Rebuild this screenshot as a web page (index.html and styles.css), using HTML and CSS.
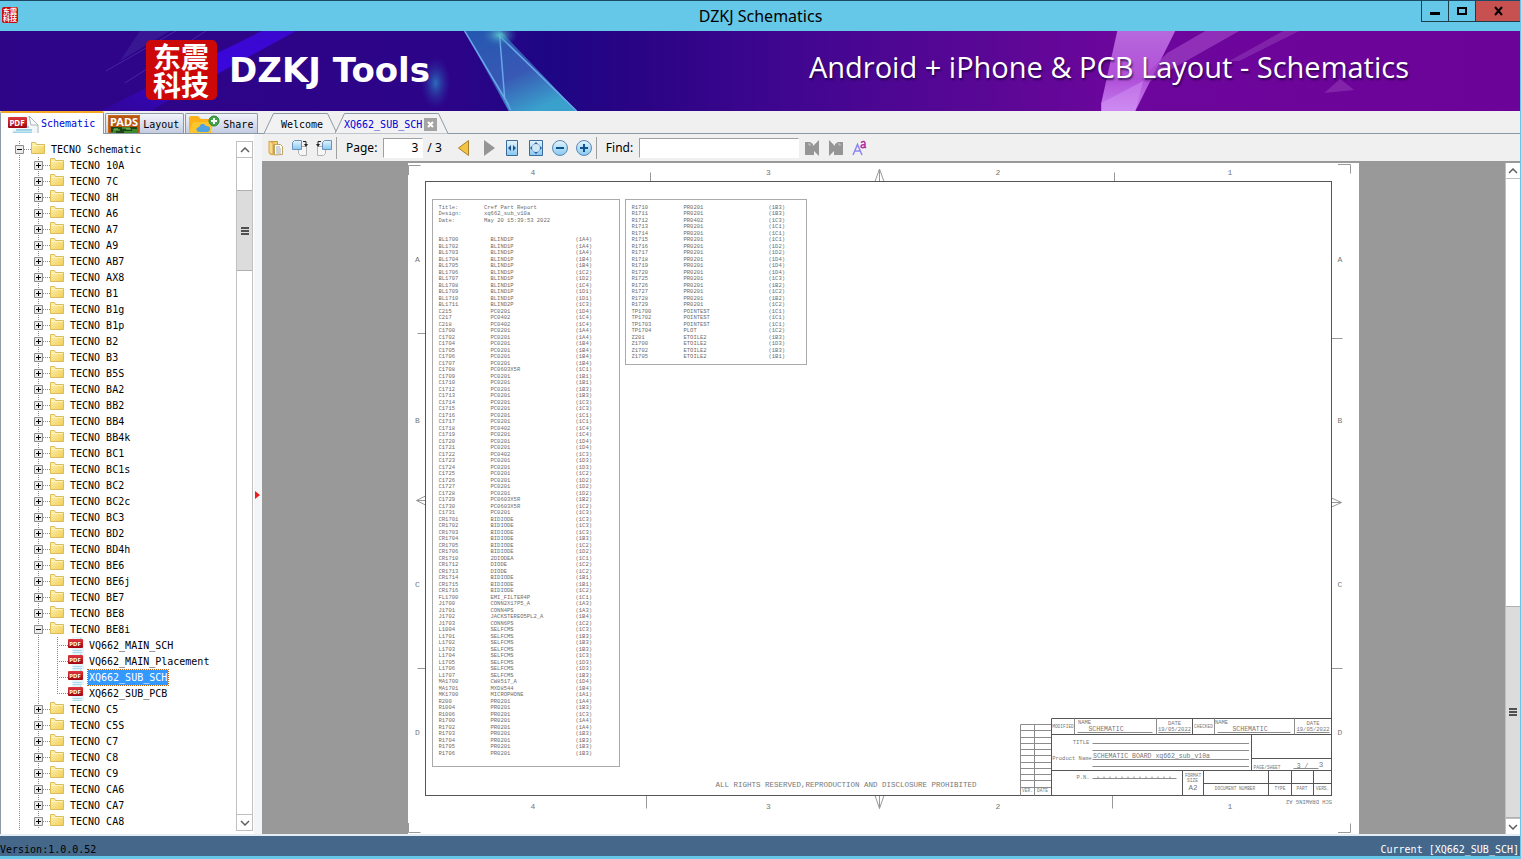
FILE: index.html
```html
<!DOCTYPE html>
<html lang="en">
  <head>
    <meta charset="UTF-8" />
    <meta name="viewport" content="width=device-width, initial-scale=1.0" />
    <title>DZKJ Schematics</title>
    <link rel="stylesheet" href="styles.css">
  </head>
  <body>
    <!-- shared icons -->
    <svg class="defs" width="0" height="0">
      <defs>
        <linearGradient id="gFolder" x1="0" y1="0" x2="1" y2="1">
          <stop offset="0" stop-color="#fff3b0" />
          <stop offset="1" stop-color="#f0cf58" />
        </linearGradient>
        <linearGradient id="gBlue" x1="0" y1="0" x2="0" y2="1">
          <stop offset="0" stop-color="#e4f4fd" />
          <stop offset="1" stop-color="#86c8f0" />
        </linearGradient>
        <linearGradient id="gRed" x1="0" y1="0" x2="0" y2="1">
          <stop offset="0" stop-color="#e0383c" />
          <stop offset="1" stop-color="#a00610" />
        </linearGradient>
      </defs>
      <symbol id="folder" viewBox="0 0 14 14">
        <path d="M.5 11.500V.5h4l1 2h8v9z" fill="url(#gFolder)" stroke="#dcbc58" />
        <path d="M1.500 3.500h11" fill="none" stroke="#fff6c4" />
      </symbol>
      <symbol id="pdf" viewBox="0 0 16 16">
        <path d="M4 0h8l4 4v12H4z" fill="#e6f5fb" />
        <path d="M12 0l4 4h-4zM5 13h9v1H5zM5 15h9v1H5z" fill="#a9dcec" />
        <rect x="0" y="2" width="15" height="9" rx="1" fill="url(#gRed)" />
        <text x="7" y="9" class="pdf-text">PDF</text>
      </symbol>
    </svg>

    <header class="titlebar">
      <span class="app-icon">东震科技</span>
      <h1>DZKJ Schematics</h1>
      <div class="win-buttons">
        <button class="win-min" aria-label="Minimize"><svg width="10" height="10"><rect y="6" width="10" height="3" /></svg></button>
        <button class="win-max" aria-label="Maximize"><svg width="10" height="10"><path d="M1 2h8v6H1z" fill="none" stroke="#000" stroke-width="2" /></svg></button>
        <button class="win-close" aria-label="Close"><svg width="10" height="10"><path d="M1 1l7 8M8 1L1 9" stroke="#000" stroke-width="2" /></svg></button>
      </div>
    </header>

    <div class="banner">
      <svg class="banner-art" viewBox="0 0 1521 80" preserveAspectRatio="none">
        <defs>
          <linearGradient id="bBase">
            <stop offset="0" stop-color="#2f0588" />
            <stop offset=".3" stop-color="#2c0488" />
            <stop offset=".36" stop-color="#1d0684" />
            <stop offset=".42" stop-color="#2a0484" />
            <stop offset=".52" stop-color="#400690" />
            <stop offset=".64" stop-color="#580795" />
            <stop offset=".74" stop-color="#6d069c" />
            <stop offset="1" stop-color="#6c0399" />
          </linearGradient>
          <linearGradient id="bShard" x1="0" y1="0" x2=".6" y2="1">
            <stop offset="0" stop-color="#2458b0" />
            <stop offset=".6" stop-color="#3858b4" />
            <stop offset="1" stop-color="#3aa0cc" />
          </linearGradient>
          <linearGradient id="bPink" x1="0" y1="0" x2="0" y2="1">
            <stop offset="0" stop-color="#b768dc" />
            <stop offset=".6" stop-color="#b04fd8" />
            <stop offset="1" stop-color="#c67ff0" />
          </linearGradient>
          <linearGradient id="bRay" x1="1" y1="0" x2="0" y2="1">
            <stop offset="0" stop-color="#3a08cc" />
            <stop offset=".5" stop-color="#3a06e0" />
            <stop offset="1" stop-color="#3407b0" stop-opacity=".4" />
          </linearGradient>
          <radialGradient id="bGlow">
            <stop offset="0" stop-color="#2a78c0" stop-opacity=".9" />
            <stop offset="1" stop-color="#2a30a0" stop-opacity="0" />
          </radialGradient>
          <radialGradient id="bTeal">
            <stop offset="0" stop-color="#5fd0d0" stop-opacity=".9" />
            <stop offset="1" stop-color="#2a60b0" stop-opacity="0" />
          </radialGradient>
        </defs>
        <rect width="1521" height="80" fill="url(#bBase)" />
        <path d="M262 0h34L150 80h-50z" fill="url(#bRay)" />
        <path d="M206 0L125 52M176 0l-70 40" stroke="#5a38b8" opacity=".6" />
        <path d="M140 0h30l-50 30z" fill="#4a3aa8" opacity=".35" />
        <ellipse cx="436" cy="52" rx="15" ry="26" fill="url(#bGlow)" />
        <path d="M465 0h36l76 80h-68z" fill="url(#bShard)" />
        <path d="M500 5l5 62 6 12M501 6l76 74M465 0l44 74" fill="none" stroke="#69a6ea" stroke-width="1.500" />
        <ellipse cx="500" cy="4" rx="18" ry="12" fill="url(#bTeal)" />
        <path d="M1118 0h58l-40 80h-34v-8z" fill="url(#bPink)" />
        <path d="M1102 72l42-22-8 30h-34z" fill="#d596f4" opacity=".45" />
        <path d="M1206 0h34l-92 52-6-4 26-26z" fill="#a347c8" opacity=".65" />
        <path d="M1284 0h16l-60 30h-10z" fill="#8f35b4" opacity=".6" />
        <path d="M1325 62l16-14 14 11z" fill="#8d30b0" opacity=".7" />
      </svg>
      <div class="brand">
        <span class="logo">东震科技</span>
        <span class="brand-name">DZKJ Tools</span>
      </div>
      <p class="slogan">Android + iPhone &amp; PCB Layout - Schematics</p>
    </div>

    <main>
      <aside class="sidebar">
        <div class="side-tabs">
          <button class="side-tab active">
            <svg width="32" height="18" viewBox="0 0 32 18">
              <path d="M5 1h17l9 9v8H5z" fill="#f4f7f9" />
              <path d="M22 1l9 9h-7z" fill="#fff" stroke="#a9b3bb" />
              <path d="M31 10v8" stroke="#a9b3bb" />
              <path d="M9 15h16M9 12h13M6 17.500h19" stroke="#9fd3e8" stroke-width="2" />
              <rect x="1" y="2" width="19" height="11" rx="1" fill="url(#gRed)" />
              <text x="10" y="11" class="pdf-big">PDF</text>
            </svg>
            Schematic
          </button>
          <button class="side-tab">
            <svg width="32" height="18" viewBox="0 0 32 18">
              <rect width="32" height="18" fill="#c86a1c" />
              <rect x="1" y="1" width="30" height="17" fill="#b9560f" />
              <path d="M3 12h27v6H3z" fill="#3f8a2c" />
              <path d="M4 17V13h9v2h10v-2h6M8 17h8" fill="none" stroke="#1c4416" stroke-width="2" />
              <path d="M6 14h4M18 14h5" stroke="#8fd070" />
              <text x="16" y="11" class="pads-text">PADS</text>
            </svg>
            Layout
          </button>
          <button class="side-tab">
            <svg width="32" height="18" viewBox="0 0 32 18">
              <path d="M1 18V3q0-2 2-2h7l3 3h7q3 0 3 3v11z" fill="#fbb117" />
              <path d="M1 18l4-11h21l-4 11z" fill="#fdc62d" />
              <path d="M9 16q-2-3 2-4 3-6 7-1 5 0 4 4-1 2-3 2h-7q-2 0-3-1z" fill="#4ea3e2" />
              <circle cx="26" cy="6" r="5" fill="#3fa648" stroke="#2b8436" />
              <path d="M26 3v6M23 6h6" stroke="#fff" stroke-width="2" />
            </svg>
            Share
          </button>
        </div>
        <div class="side-body">
          <ul class="tree" id="tree"></ul>
          <div class="scrollbar side-scroll">
            <button aria-label="Scroll up"><svg width="10" height="6"><path d="M1 5l4-4 4 4" /></svg></button>
            <div class="thumb"><i></i><i></i><i></i></div>
            <button aria-label="Scroll down"><svg width="10" height="6"><path d="M1 1l4 4 4-4" /></svg></button>
          </div>
        </div>
      </aside>
      <div class="splitter"><svg width="5" height="8"><path d="M0 0l5 4-5 4z" fill="#e8201c" /></svg></div>

      <section class="viewer">
        <nav class="doc-tabs">
          <button class="doc-tab welcome">
            <svg width="75" height="21" viewBox="0 0 75 21"><path d="M0 20.500h1L10.500.5h54l9.500 20" fill="#f2f2f3" stroke="#8b9aa5" /></svg>
            <span>Welcome</span>
          </button>
          <button class="doc-tab current">
            <svg width="113" height="21" viewBox="0 0 113 21"><path d="M0 20.500L9.500.5h94l9.500 20" fill="#f2f2f3" stroke="#8b9aa5" /></svg>
            <span>XQ662_SUB_SCH</span>
            <svg class="tab-close" width="13" height="13"><rect width="13" height="13" fill="#a3a3a3" /><path d="M4 4l5 5M9 4L4 9" stroke="#fff" stroke-width="2" /></svg>
          </button>
        </nav>

        <div class="toolbar">
          <button aria-label="Open">
            <svg width="16" height="16" viewBox="0 0 16 16">
              <path d="M2.500 1.500h7v3h-4v10h-3z" fill="#f3cc6e" stroke="#c79a3c" />
              <path d="M6.500 4.500h6l2 2v8l-8 .5z" fill="#fff" stroke="#c0a25c" />
              <path d="M8 7h4M8 9h5M8 11h5M8 13h5" stroke="#9aa7b3" />
              <path d="M1 1l4 2v12l-4-2z" fill="#f8d98c" stroke="#d2a548" />
            </svg>
          </button>
          <button aria-label="Rotate left">
            <svg width="16" height="16" viewBox="0 0 16 16">
              <path d="M6.500 6.500h8v9h-6l-2-2z" fill="#f6f6f6" stroke="#b0b4b8" />
              <path d="M2.500.5h7v9h-9v-7z" fill="url(#gBlue)" stroke="#6a92bc" />
              <path d="M11 1.500h3V5" fill="none" stroke="#222" />
              <path d="M12 4h4l-2 3z" fill="#222" />
            </svg>
          </button>
          <button aria-label="Rotate right">
            <svg width="16" height="16" viewBox="0 0 16 16">
              <path d="M1.500 6.500h8v7l-2 2h-6z" fill="#f6f6f6" stroke="#b0b4b8" />
              <path d="M8.500.5h7v9h-9v-7z" fill="url(#gBlue)" stroke="#6a92bc" />
              <path d="M5 1.500H2V5" fill="none" stroke="#222" />
              <path d="M0 4h4L2 7z" fill="#222" />
            </svg>
          </button>
          <span class="sep"></span>
          <label for="page">Page:</label>
          <input type="text" id="page" value="3" />
          <span class="total">/ 3</span>
          <button aria-label="Previous page"><svg width="16" height="16" viewBox="0 0 16 16"><path d="M12.500.5v15L2.500 8z" fill="#f2c445" stroke="#a9802c" /></svg></button>
          <button aria-label="Next page"><svg width="16" height="16" viewBox="0 0 16 16"><path d="M4 0v16l11-8z" fill="#959595" /></svg></button>
          <button aria-label="Fit width">
            <svg width="16" height="16" viewBox="0 0 16 16">
              <path d="M2.500.5h11v15h-11z" fill="url(#gBlue)" stroke="#3c6a9c" />
              <path d="M7 5v6L4 8zM9 5v6l3-3z" fill="#1d5490" />
            </svg>
          </button>
          <button aria-label="Fit page">
            <svg width="16" height="16" viewBox="0 0 16 16">
              <path d="M1.500.5h13v15h-13z" fill="url(#gBlue)" stroke="#3c6a9c" />
              <path d="M8 2l3 3H5zM8 14l3-3H5zM2 8l3-3v6zM14 8l-3-3v6z" fill="#2b5f99" />
              <circle cx="8" cy="8" r="4" fill="#cfe8f8" />
            </svg>
          </button>
          <button aria-label="Zoom out">
            <svg width="16" height="16" viewBox="0 0 16 16">
              <circle cx="8" cy="8" r="7.500" fill="url(#gBlue)" stroke="#5a88b4" />
              <path d="M4 8h8" stroke="#0d5590" stroke-width="2" />
            </svg>
          </button>
          <button aria-label="Zoom in">
            <svg width="16" height="16" viewBox="0 0 16 16">
              <circle cx="8" cy="8" r="7.500" fill="url(#gBlue)" stroke="#5a88b4" />
              <path d="M4 8h8M8 4v8" stroke="#0d5590" stroke-width="2" />
            </svg>
          </button>
          <span class="sep"></span>
          <label for="find">Find:</label>
          <input type="text" id="find" />
          <button aria-label="Find previous"><svg width="16" height="16" viewBox="0 0 16 16"><path d="M1 2h5l3 2v2l6-6v16L10 11v4H1z" fill="#959595" /><path d="M4 4h2v2" fill="none" stroke="#ccc" /></svg></button>
          <button aria-label="Find next"><svg width="16" height="16" viewBox="0 0 16 16"><path d="M15 2h-5L7 4v2L1 0v16l5-5v4h9z" fill="#959595" /><path d="M10 4h2v2" fill="none" stroke="#ccc" /></svg></button>
          <button aria-label="Match case">
            <svg width="16" height="16" viewBox="0 0 16 16">
              <path d="M1 15L5.500 4.500 10 15M3 11h6" fill="none" stroke="#8f86f0" stroke-width="1.500" />
              <path d="M9 2.500q4-2.500 4 1V8M13 4.500q-4 0-4 2t4 .5l1 1" fill="none" stroke="#b52aa0" stroke-width="1.500" />
            </svg>
          </button>
        </div>

        <div class="canvas">
          <div class="sheet-area">
            <svg class="sheet" viewBox="0 0 1902 1342">
              <rect width="1902" height="1342" fill="#fff" />

              <!-- crop marks, zone ticks and centring arrows -->
              <path class="light" d="M1 24V5h24M1860 3h25v18M1860 1339h25v-18M1 1320v19h24
                M485 19v18M1413 19v18M477 1265v26M1409 1265v26M19 341h16M19 1011h16M1847 351h22M1847 1011h22
                M943 12l-9 25M943 12l9 25M943 12v25M943 1291l-9-26M943 1291l9-26M943 1291v-26
                M17 675l18-9M17 675l18 9M17 675h18M1867 679l-20-9M1867 679l-20 9M1867 679h-20" />
              <rect class="dark" x="35" y="37" width="1812" height="1228" />
              <g class="zone">
                <text x="250" y="23">4</text><text x="721" y="23">3</text><text x="1180" y="23">2</text><text x="1644" y="23">1</text>
                <text x="250" y="1292">4</text><text x="721" y="1292">3</text><text x="1180" y="1292">2</text><text x="1644" y="1292">1</text>
                <text x="19" y="197">A</text><text x="19" y="519">B</text><text x="19" y="847">C</text><text x="19" y="1143">D</text>
                <text x="1864" y="197">A</text><text x="1864" y="519">B</text><text x="1864" y="847">C</text><text x="1864" y="1143">D</text>
              </g>

              <!-- part report -->
              <rect class="box" x="49" y="73" width="374" height="1134" />
              <rect class="box" x="435" y="73" width="362" height="330" />
              <foreignObject x="61" y="82" width="360" height="1120">
                <table class="report-head">
                  <tr><th>Title:</th><td>Cref Part Report</td></tr>
                  <tr><th>Design:</th><td>xq662_sub_v10a</td></tr>
                  <tr><th>Date:</th><td>May 20 15:39:53 2022</td></tr>
                </table>
                <table class="parts" id="partsLeft"></table>
              </foreignObject>
              <foreignObject x="447" y="82" width="348" height="318">
                <table class="parts" id="partsRight"></table>
              </foreignObject>

              <!-- revision table -->
              <path class="dark thin" d="M1225 1265V1123h61M1253 1123v142M1225 1135h61M1225 1149h61M1225 1161h61M1225 1173h61M1225 1185h61
                M1225 1199h61M1225 1211h61M1225 1223h61M1225 1235h61M1225 1249h61" />
              <!-- title block -->
              <path class="dark" d="M1287 1265V1111h560M1287 1143h560M1569 1111v32M1687 1143v72M1687 1191h160M1287 1215h560
                M1549 1215v50M1591 1215v50M1591 1241h256M1721 1215v50M1767 1215v50M1811 1215v50" />
              <path class="dark thin" d="M1333 1111v32M1497 1111v32M1613 1111v32M1773 1111v32
                M1339 1139h150M1501 1139h64M1619 1139h146M1777 1139h66
                M1369 1161h313M1369 1175h313M1369 1193h313M1369 1207h313M1369 1231h168M1771 1211h50" />
              <path class="dark thin" d="M1380 1227v4M1392 1227v4M1404 1227v4M1416 1227v4M1428 1227v4M1440 1227v4M1452 1227v4
                M1464 1227v4M1476 1227v4M1488 1227v4M1500 1227v4M1512 1227v4M1524 1227v4" />
              <g class="tiny">
                <text x="1310" y="1130">MODIFIED</text>
                <text x="1591" y="1130">CHECKED</text>
                <text x="1239" y="1258">VER.</text>
                <text x="1269" y="1258">DATE</text>
                <text x="1570" y="1228">FORMAT</text>
                <text x="1569" y="1238">SIZE</text>
                <text x="1654" y="1254">DOCUMENT NUMBER</text>
                <text x="1744" y="1254">TYPE</text>
                <text x="1788" y="1254">PART</text>
                <text x="1829" y="1254">VERS.</text>
                <text x="1718" y="1211">PAGE/SHEET</text>
              </g>
              <g class="small">
                <text x="1353" y="1122">NAME</text>
                <text x="1533" y="1124">DATE</text>
                <text x="1533" y="1136">19/05/2022</text>
                <text x="1627" y="1122">NAME</text>
                <text x="1810" y="1124">DATE</text>
                <text x="1810" y="1136">19/05/2022</text>
                <text x="1346" y="1162">TITLE</text>
                <text x="1328" y="1194">Product Name</text>
                <text x="1350" y="1231">P.N.</text>
                <text x="1817" y="-1274" transform="matrix(-1 0 0 -1 3619 0)">SCH DRAWING A2</text>
              </g>
              <g class="medium">
                <text x="1396" y="1136">SCHEMATIC</text>
                <text x="1684" y="1135">SCHEMATIC</text>
                <text x="1487" y="1189">SCHEMATIC BOARD xq662_sub_v10a</text>
                <text x="1789" y="1209">3 /</text>
              </g>
              <g class="large">
                <text x="876" y="1247">ALL RIGHTS RESERVED,REPRODUCTION AND DISCLOSURE PROHIBITED</text>
                <text x="1570" y="1254">A2</text>
                <text x="1826" y="1208">3</text>
              </g>
            </svg>
          </div>
          <div class="scrollbar main-scroll">
            <button aria-label="Scroll up"><svg width="10" height="6"><path d="M1 5l4-4 4 4" /></svg></button>
            <div class="thumb"><i></i><i></i><i></i></div>
            <button aria-label="Scroll down"><svg width="10" height="6"><path d="M1 1l4 4 4-4" /></svg></button>
          </div>
        </div>
      </section>
    </main>

    <footer class="statusbar">
      <span>Version:1.0.0.52</span>
      <span class="current-doc">Current [XQ662_SUB_SCH]</span>
    </footer>
    <script src="script.js"></script>
  </body>
</html>
```

FILE: styles.css
```css
* {
  box-sizing: border-box;
}

body {
  margin: 0;
  height: 100vh;
  display: flex;
  flex-direction: column;
  overflow: hidden;
  border-right: 1px solid #66c8e6;
  border-bottom: 3px solid #66c8e6;
  background: #f0f0f0;
  color: #000;
  font-family: "DejaVu Sans Mono", "Liberation Mono", monospace;
  font-size: 10px;
}

button {
  margin: 0;
  padding: 0;
  border: 0;
  background: none;
  font: inherit;
  color: inherit;
}

svg {
  display: block;
  flex: none;
}

.defs {
  position: absolute;
}

/* title bar */
.titlebar {
  position: relative;
  display: flex;
  align-items: center;
  justify-content: center;
  height: 31px;
  flex: none;
  margin-right: -1px;
  border-top: 1px solid #1c4a66;
  background: #66c8e8;
}

.titlebar h1 {
  margin: 0;
  font: 16px/20px "Noto Sans", sans-serif;
}

.app-icon,
.logo {
  background: #cc0808;
  color: #fff;
  font-family: "Noto Sans CJK SC", sans-serif;
  font-weight: 700;
}

.app-icon {
  position: absolute;
  left: 2px;
  top: 6px;
  width: 16px;
  padding: 1px;
  border-radius: 2px;
  font-size: 7px;
  line-height: 7px;
}

.win-buttons {
  position: absolute;
  right: 0;
  top: 0;
  display: flex;
  height: 21px;
  border: 1px solid #1d3c48;
  border-top: 0;
  border-right: 0;
}

.win-buttons button {
  display: flex;
  align-items: center;
  justify-content: center;
  width: 27px;
  border-right: 1px solid #1d3c48;
}

.win-buttons .win-close {
  width: 45px;
  border-right: 0;
  background: #c75050;
}

/* banner */
.banner {
  position: relative;
  display: flex;
  align-items: center;
  justify-content: space-between;
  height: 80px;
  flex: none;
  padding: 0 111px 2px 146px;
  color: #fff;
}

.banner-art {
  position: absolute;
  inset: 0;
  width: 100%;
  height: 100%;
}

.brand {
  position: relative;
  display: flex;
  align-items: center;
  gap: 12px;
}

.logo {
  width: 71px;
  padding: 2px 7px;
  border-radius: 5px;
  font-size: 28px;
  line-height: 28px;
}

.brand-name {
  font: 700 34px/48px "DejaVu Sans", sans-serif;
}

.slogan {
  position: relative;
  margin: 0 0 6px;
  font: 29px/40px "Open Sans", "Noto Sans", sans-serif;
  text-shadow: 1px 2px 2px rgba(20, 0, 50, 0.7);
}

main {
  display: flex;
  flex: 1;
  min-height: 0;
  border-bottom: 2px solid #e6eef4;
}

/* left panel */
.sidebar {
  display: flex;
  flex-direction: column;
  width: 254px;
  flex: none;
}

.side-tabs {
  display: flex;
  align-items: flex-end;
  gap: 1px;
  height: 23px;
  flex: none;
  margin-right: -8px;
  border-bottom: 1px solid #8b9aa5;
}

.side-tab {
  display: flex;
  align-items: center;
  gap: 3px;
  height: 20px;
  padding: 1px 4px 0 2px;
  border: 1px solid #8b9aa5;
  border-bottom: 0;
  border-radius: 2px 2px 0 0;
  background: linear-gradient(#f2f4fa, #c4cce2);
  white-space: nowrap;
}

.side-tab.active {
  height: 23px;
  margin-bottom: -1px;
  padding: 0 8px 0 6px;
  gap: 2px;
  border-top: 2px solid #f5a623;
  background: #fff;
  color: #0000d8;
}

.pdf-big,
.pdf-text,
.pads-text {
  fill: #fff;
  font-family: "Noto Sans", sans-serif;
  font-weight: 700;
  text-anchor: middle;
}

.pdf-big {
  font-size: 8px;
}

.pdf-text {
  font-size: 6px;
}

.pads-text {
  font-size: 11px;
}

.side-body {
  display: flex;
  flex: 1;
  min-height: 0;
  padding: 7px 1px 3px 0;
  border-left: 1px solid #8b9aa5;
  background: #fff;
}

.tree,
.tree ul {
  margin: 0;
  padding: 0;
  list-style: none;
}

.tree {
  position: relative;
  flex: 1;
  overflow: hidden;
}

/* dotted guide lines */
.tree::before,
.tree ul::before {
  content: "";
  position: absolute;
  top: 0;
  bottom: 0;
  left: 18px;
  width: 1px;
  background: repeating-linear-gradient(#8a8a8a 0 1px, transparent 1px 2px);
}

.tree ul {
  position: relative;
  padding-left: 19px;
}

.tree ul::before {
  left: 37px;
}

.tree ul ul::before {
  bottom: 8px;
}

.row {
  position: relative;
  display: flex;
  align-items: center;
  height: 16px;
  padding-left: 14px;
  line-height: 15px;
  white-space: nowrap;
}

.row::before {
  content: "";
  order: 1;
  width: 7px;
  height: 1px;
  background: repeating-linear-gradient(90deg, #8a8a8a 0 1px, transparent 1px 2px);
}

.row > * {
  order: 2;
}

.row .toggle {
  order: 0;
  width: 9px;
  height: 9px;
}

.row .label {
  margin-left: 5px;
  padding: 0 1px;
}

.row.leaf {
  padding-left: 18px;
}

.row.leaf::before {
  width: 11px;
}

.row.leaf .label {
  margin-left: 4px;
}

.row.selected .label {
  background: #3399ff;
  color: #fff;
  outline: 1px dotted #c06010;
}

/* scrollbars */
.scrollbar {
  display: flex;
  flex-direction: column;
  flex: none;
  border-left: 1px solid #c0c0c0;
  background: #fff;
}

.scrollbar button {
  display: flex;
  align-items: center;
  justify-content: center;
  height: 16px;
  flex: none;
  border: solid #c0c0c0;
  border-width: 0 0 1px;
}

.scrollbar button:last-child {
  border-width: 1px 0 0;
}

.scrollbar path {
  fill: none;
  stroke: #606060;
  stroke-width: 1.5;
}

.thumb {
  display: flex;
  flex-direction: column;
  align-items: center;
  justify-content: center;
  gap: 1px;
  border: solid #b0b0b0;
  border-width: 1px 0;
  background: #dcdcdc;
}

.thumb i {
  width: 8px;
  height: 2px;
  background: #505050;
}

.side-scroll {
  width: 17px;
  border: 1px solid #c0c0c0;
}

.side-scroll .thumb {
  height: 81px;
  margin: 32px 0 auto;
}

.main-scroll {
  width: 15px;
}

.main-scroll .thumb {
  flex: 213;
}

/* empty track above the thumb */
.main-scroll button:first-child + .thumb {
  margin-top: 427px;
}

.splitter {
  display: flex;
  align-items: center;
  width: 8px;
  flex: none;
  margin-top: 23px;
  padding: 22px 0 0 1px;
  background: #f4f5f8;
}

/* document area */
.viewer {
  display: flex;
  flex-direction: column;
  flex: 1;
  min-width: 0;
}

.doc-tabs {
  display: flex;
  height: 23px;
  flex: none;
  padding: 2px 0 0 1px;
  border-bottom: 1px solid #8b9aa5;
}

.doc-tab {
  position: relative;
  height: 21px;
  padding-top: 2px;
  display: flex;
  align-items: center;
}

.doc-tab > svg:first-child {
  position: absolute;
  top: 0;
  left: 0;
}

.doc-tab span {
  position: relative;
}

.doc-tab.welcome {
  width: 72px;
  padding-left: 18px;
}

.doc-tab.current {
  width: 113px;
  padding-left: 9px;
  color: #0000d8;
}

.tab-close {
  position: relative;
  margin-left: 2px;
}

.toolbar {
  display: flex;
  align-items: center;
  gap: 8px;
  height: 27px;
  flex: none;
  padding-left: 6px;
  background: #f0f0f0;
  font: 12px/16px "Noto Sans", sans-serif;
}

.sep {
  width: 1px;
  height: 22px;
  background: #a0a0a0;
  margin: 0 1px 0 -4px;
}

.toolbar input {
  height: 20px;
  margin-left: -2px;
  padding: 0 4px;
  border: 1px solid #fff;
  border-top-color: #a0a0a0;
  border-left-color: #a0a0a0;
  border-radius: 0;
  background: #fff;
  font: inherit;
}

#page {
  width: 40px;
  text-align: right;
}

#find {
  width: 160px;
  margin-right: -3px;
}

.total {
  margin: 0 6px 0 -4px;
}

.canvas {
  display: flex;
  flex: 1;
  min-height: 0;
  border-top: 2px solid #999;
}

.sheet-area {
  display: flex;
  justify-content: center;
  flex: 1;
  min-width: 0;
  background: #999;
}

.sheet {
  height: 100%;
  max-width: 100%;
}

/* the drawing, two user units to a pixel */
.sheet path,
.sheet .dark,
.sheet .box {
  fill: none;
  stroke-width: 2;
}

.sheet .dark {
  stroke: #555;
}

.sheet .thin {
  stroke: #8c8c8c;
}

.sheet .light {
  stroke: #999;
}

.sheet .box {
  stroke: #aaa;
}

.sheet text,
.sheet table {
  font-family: "Liberation Mono", monospace;
}

.sheet text {
  fill: #777;
  text-anchor: middle;
}

.sheet .zone {
  font-size: 16px;
}

.sheet .tiny {
  font-size: 9px;
}

.sheet .small {
  font-size: 11px;
}

.sheet .medium {
  font-size: 13px;
}

.sheet .large {
  font-size: 15px;
}

.sheet table {
  border-collapse: collapse;
  table-layout: fixed;
  color: #6c6c6c;
  font-size: 11px;
  line-height: 13px;
  white-space: nowrap;
}

.sheet th,
.sheet td {
  height: 13px;
  padding: 0;
  font-weight: 400;
  text-align: left;
}

.report-head {
  width: 300px;
  margin-bottom: 26px;
}

.report-head th {
  width: 91px;
}

.parts {
  width: 320px;
}

.parts td:nth-child(1) {
  width: 104px;
}

.parts td:nth-child(2) {
  width: 170px;
}

.statusbar {
  display: flex;
  align-items: center;
  justify-content: space-between;
  height: 20px;
  flex: none;
  padding: 6px 1px 0 0;
  background: #45678a;
}

.current-doc {
  color: #fff;
}
```

FILE: script.js
```javascript
var folders = [
  "10A", "7C", "8H", "A6", "A7", "A9", "AB7", "AX8", "B1", "B1g", "B1p", "B2", "B3", "B5S",
  "BA2", "BB2", "BB4", "BB4k", "BC1", "BC1s", "BC2", "BC2c", "BC3", "BD2", "BD4h", "BE6",
  "BE6j", "BE7", "BE8", "BE8i", "C5", "C5S", "C7", "C8", "C9", "CA6", "CA7", "CA8",
];
var openFolder = "BE8i";
var files = ["VQ662_MAIN_SCH", "VQ662_MAIN_Placement", "XQ662_SUB_SCH", "XQ662_SUB_PCB"];
var currentFile = "XQ662_SUB_SCH";

function toggle(open) {
  return `<svg class="toggle" viewBox="0 0 9 9"><path d="M.5.5h8v8h-8z" fill="#ececec" stroke="#8c8c8c"/>
    <path d="M2 4.500h5${open ? "" : "M4.500 2v5"}" stroke="#000"/></svg>`;
}

function folderRow(name, open) {
  return `<div class="row">${toggle(open)}<svg width="14" height="14"><use href="#folder"/></svg><span class="label">${name}</span></div>`;
}

function fileRow(name) {
  var cls = name === currentFile ? "row leaf selected" : "row leaf";
  return `<li><div class="${cls}"><svg width="16" height="16"><use href="#pdf"/></svg><span class="label">${name}</span></div></li>`;
}

var items = folders.map((name) => {
  var open = name === openFolder;
  var children = open ? `<ul>${files.map(fileRow).join("")}</ul>` : "";
  return `<li>${folderRow("TECNO " + name, open)}${children}</li>`;
});
document.getElementById("tree").innerHTML =
  `<li>${folderRow("TECNO Schematic", true)}<ul>${items.join("")}</ul></li>`;

// reference, part, zone
var left = `BL1700 BLIND1P 1A4,BL1702 BLIND1P 1A4,BL1703 BLIND1P 1A4,BL1704 BLIND1P 1B4,BL1705 BLIND1P 1B4
BL1706 BLIND1P 1C2,BL1707 BLIND1P 1D2,BL1708 BLIND1P 1C4,BL1709 BLIND1P 1D1,BL1710 BLIND1P 1D1,BL1711 BLIND2P 1C3
C215 PC0201 1D4,C217 PC0402 1C4,C218 PC0402 1C4,C1700 PC0201 1A4,C1702 PC0201 1A4,C1704 PC0201 1B4
C1705 PC0201 1B4,C1706 PC0201 1B4,C1707 PC0201 1B4,C1708 PC0603X5R 1C1,C1709 PC0201 1B1,C1710 PC0201 1B1
C1712 PC0201 1B3,C1713 PC0201 1B3,C1714 PC0201 1C3,C1715 PC0201 1C3,C1716 PC0201 1C1,C1717 PC0201 1C1
C1718 PC0402 1C4,C1719 PC0201 1C4,C1720 PC0201 1D4,C1721 PC0201 1D4,C1722 PC0402 1C3,C1723 PC0201 1D3
C1724 PC0201 1D3,C1725 PC0201 1C2,C1726 PC0201 1D2,C1727 PC0201 1D2,C1728 PC0201 1D2,C1729 PC0603X5R 1B2
C1730 PC0603X5R 1C2,C1731 PC0201 1C3,CR1701 BIDIODE 1C3,CR1702 BIDIODE 1C3,CR1703 BIDIODE 1C3
CR1704 BIDIODE 1B3,CR1705 BIDIODE 1C2,CR1706 BIDIODE 1D2,CR1710 2DIODEA 1C1,CR1712 DIODE 1C2,CR1713 DIODE 1C2
CR1714 BIDIODE 1B1,CR1715 BIDIODE 1B1,CR1716 BIDIODE 1C2,FL1700 EMI_FILTER4P 1C1,J1700 CONN2X17P5_A 1A3
J1701 CONN4PS 1A3,J1702 JACKSTEREO5PL2_A 1B4,J1703 CONN6PS 1C2,L1004 SELFCMS 1C3,L1701 SELFCMS 1B3
L1702 SELFCMS 1B3,L1703 SELFCMS 1B3,L1704 SELFCMS 1C3,L1705 SELFCMS 1D3,L1706 SELFCMS 1D3,L1707 SELFCMS 1B3
MA1700 CW8517_A 1D4,MA1701 MXD8544 1B4,MK1700 MICROPHONE 1A1,R200 PR0201 1A4,R1004 PR0201 1B3,R1006 PR0201 1C3
R1700 PR0201 1A4,R1702 PR0201 1A4,R1703 PR0201 1B3,R1704 PR0201 1B3,R1705 PR0201 1B3,R1706 PR0201 1B3`;

var right = `R1710 PR0201 1B3,R1711 PR0201 1B3,R1712 PR0402 1C3,R1713 PR0201 1C1,R1714 PR0201 1C1,R1715 PR0201 1C1
R1716 PR0201 1D2,R1717 PR0201 1D2,R1718 PR0201 1D4,R1719 PR0201 1D4,R1720 PR0201 1D4,R1725 PR0201 1C3
R1726 PR0201 1B2,R1727 PR0201 1C2,R1728 PR0201 1B2,R1729 PR0201 1C2,TP1700 POINTEST 1C1,TP1702 POINTEST 1C1
TP1703 POINTEST 1C1,TP1704 PLOT 1C2,Z201 ETOILE2 1B3,Z1700 ETOILE2 1D3,Z1702 ETOILE2 1B3,Z1705 ETOILE2 1B1`;

function fillParts(id, text) {
  document.getElementById(id).innerHTML = text
    .split(/[,\n]/)
    .map((line) => {
      var p = line.split(" ");
      return `<tr><td>${p[0]}</td><td>${p[1]}</td><td>(${p[2]})</td></tr>`;
    })
    .join("");
}

fillParts("partsLeft", left);
fillParts("partsRight", right);
```
